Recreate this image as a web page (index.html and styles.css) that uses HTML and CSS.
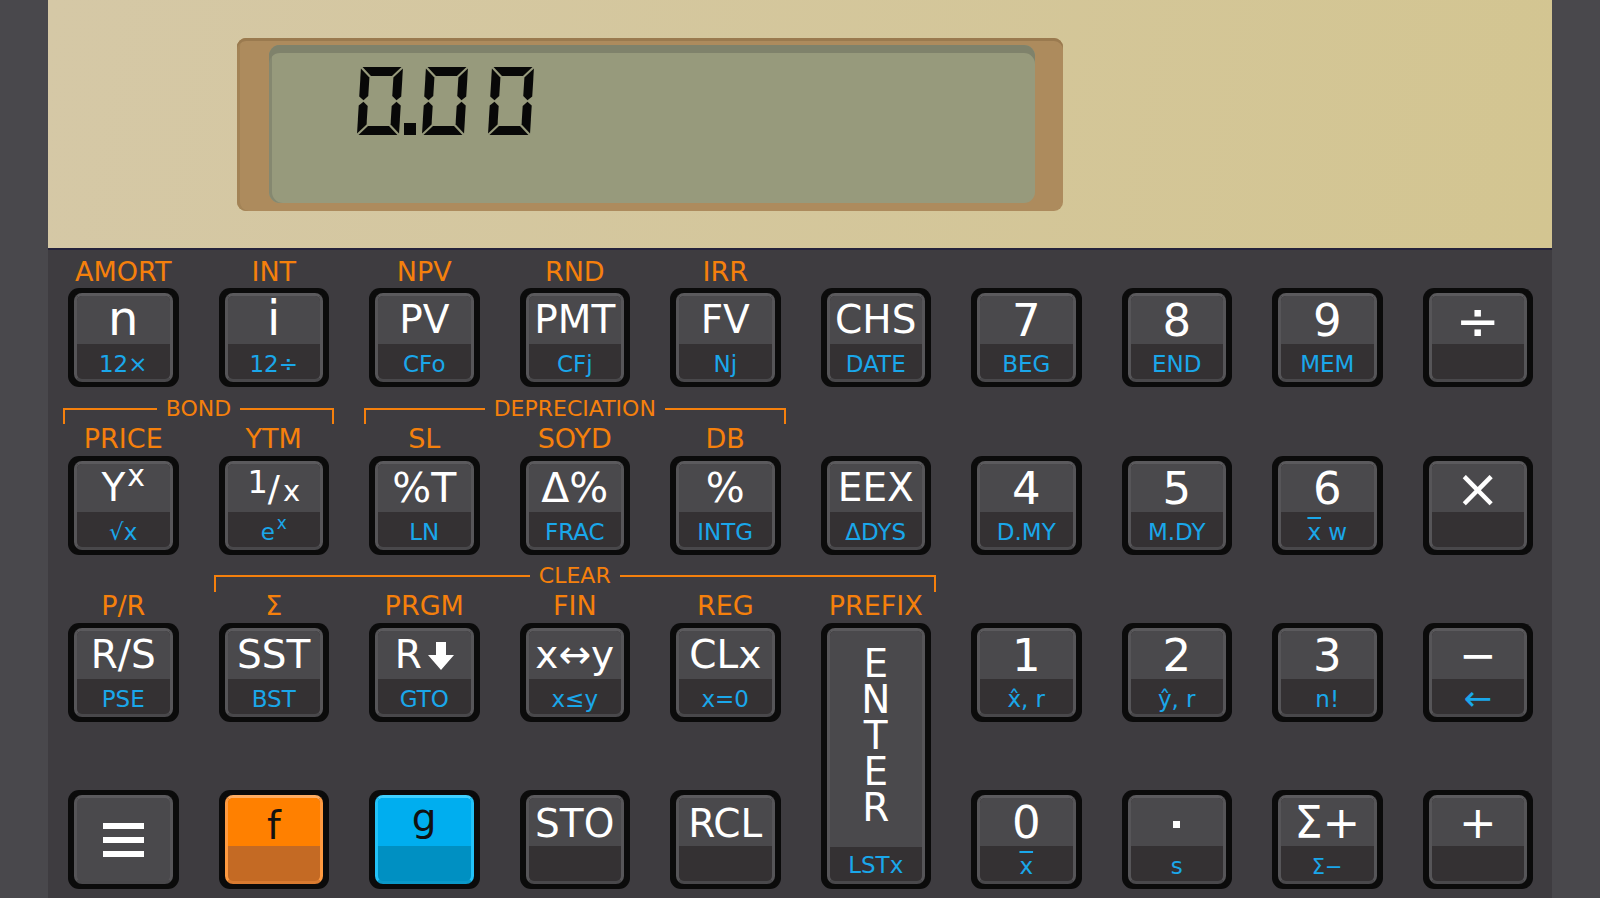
FILE: index.html
```html
<!DOCTYPE html>
<html>
<head>
<meta charset="utf-8">
<link rel="stylesheet" href="styles.css">
</head>
<body>
<div class="calc">
  <div class="display">
    <div class="bezel">
      <div class="lcd">
        <svg class="digits" width="190" height="70" viewBox="0 0 190 70">
          <g fill="#080808">
            <g transform="translate(6,0) skewX(-3.4)">
              <polygon points="1.5,0 40.5,0 31.5,9 10.5,9"/>
              <polygon points="0,1.5 9,10.5 9,29 4.5,33.3 0,29.5"/>
              <polygon points="42,1.5 42,29.5 37.5,33.3 33,29 33,10.5"/>
              <polygon points="0,38.5 4.5,34.7 9,39 9,57.5 0,66.5"/>
              <polygon points="42,38.5 42,66.5 33,57.5 33,39 37.5,34.7"/>
              <polygon points="10.5,59 31.5,59 40.5,68 1.5,68"/>
            </g>
            <rect x="49" y="56" width="12" height="12"/>
            <g transform="translate(71,0) skewX(-3.4)">
              <polygon points="1.5,0 40.5,0 31.5,9 10.5,9"/>
              <polygon points="0,1.5 9,10.5 9,29 4.5,33.3 0,29.5"/>
              <polygon points="42,1.5 42,29.5 37.5,33.3 33,29 33,10.5"/>
              <polygon points="0,38.5 4.5,34.7 9,39 9,57.5 0,66.5"/>
              <polygon points="42,38.5 42,66.5 33,57.5 33,39 37.5,34.7"/>
              <polygon points="10.5,59 31.5,59 40.5,68 1.5,68"/>
            </g>
            <g transform="translate(137,0) skewX(-3.4)">
              <polygon points="1.5,0 40.5,0 31.5,9 10.5,9"/>
              <polygon points="0,1.5 9,10.5 9,29 4.5,33.3 0,29.5"/>
              <polygon points="42,1.5 42,29.5 37.5,33.3 33,29 33,10.5"/>
              <polygon points="0,38.5 4.5,34.7 9,39 9,57.5 0,66.5"/>
              <polygon points="42,38.5 42,66.5 33,57.5 33,39 37.5,34.7"/>
              <polygon points="10.5,59 31.5,59 40.5,68 1.5,68"/>
            </g>
          </g>
        </svg>
      </div>
    </div>
  </div>

  <div class="keys">
    <!-- row 1 labels -->
    <div class="lab r1">AMORT</div>
    <div class="lab r1">INT</div>
    <div class="lab r1">NPV</div>
    <div class="lab r1">RND</div>
    <div class="lab r1">IRR</div>

    <!-- row 1 keys -->
    <div class="key r2 big"><div class="face"><div class="top">n</div><div class="bot">12×</div></div></div>
    <div class="key r2 big"><div class="face"><div class="top">i</div><div class="bot">12÷</div></div></div>
    <div class="key r2"><div class="face"><div class="top">PV</div><div class="bot">CFo</div></div></div>
    <div class="key r2"><div class="face"><div class="top">PMT</div><div class="bot">CFj</div></div></div>
    <div class="key r2"><div class="face"><div class="top">FV</div><div class="bot">Nj</div></div></div>
    <div class="key r2"><div class="face"><div class="top">CHS</div><div class="bot">DATE</div></div></div>
    <div class="key r2 num"><div class="face"><div class="top">7</div><div class="bot">BEG</div></div></div>
    <div class="key r2 num"><div class="face"><div class="top">8</div><div class="bot">END</div></div></div>
    <div class="key r2 num"><div class="face"><div class="top">9</div><div class="bot">MEM</div></div></div>
    <div class="key r2 num"><div class="face"><div class="top"><span class="op">÷</span></div><div class="bot"></div></div></div>

    <!-- brackets -->
    <div class="bracket r3 c1-3"><div class="bl"></div><span>BOND</span><div class="brr"></div></div>
    <div class="bracket r3 c3-6"><div class="bl"></div><span>DEPRECIATION</span><div class="brr"></div></div>

    <!-- row 2 labels -->
    <div class="lab r4">PRICE</div>
    <div class="lab r4">YTM</div>
    <div class="lab r4">SL</div>
    <div class="lab r4">SOYD</div>
    <div class="lab r4">DB</div>

    <!-- row 2 keys -->
    <div class="key r5"><div class="face"><div class="top">Y<span class="supx">x</span></div><div class="bot">√x</div></div></div>
    <div class="key r5"><div class="face"><div class="top"><span class="frac1">1</span><span class="slash">/</span><span class="fracx">x</span></div><div class="bot">e<span class="supe">x</span></div></div></div>
    <div class="key r5 pct"><div class="face"><div class="top">%T</div><div class="bot">LN</div></div></div>
    <div class="key r5 pct"><div class="face"><div class="top">Δ%</div><div class="bot">FRAC</div></div></div>
    <div class="key r5 pct"><div class="face"><div class="top">%</div><div class="bot">INTG</div></div></div>
    <div class="key r5"><div class="face"><div class="top">EEX</div><div class="bot">ΔDYS</div></div></div>
    <div class="key r5 num"><div class="face"><div class="top">4</div><div class="bot">D.MY</div></div></div>
    <div class="key r5 num"><div class="face"><div class="top">5</div><div class="bot">M.DY</div></div></div>
    <div class="key r5 num"><div class="face"><div class="top">6</div><div class="bot"><span class="ovl">x</span> w</div></div></div>
    <div class="key r5 num"><div class="face"><div class="top"><span class="op">×</span></div><div class="bot"></div></div></div>

    <!-- clear bracket -->
    <div class="bracket r6 c2-7"><div class="bl"></div><span>CLEAR</span><div class="brr"></div></div>

    <!-- row 3 labels -->
    <div class="lab r7">P/R</div>
    <div class="lab r7">Σ</div>
    <div class="lab r7">PRGM</div>
    <div class="lab r7">FIN</div>
    <div class="lab r7">REG</div>
    <div class="lab r7">PREFIX</div>

    <!-- row 3 keys -->
    <div class="key r8"><div class="face"><div class="top">R/S</div><div class="bot">PSE</div></div></div>
    <div class="key r8"><div class="face"><div class="top">SST</div><div class="bot">BST</div></div></div>
    <div class="key r8"><div class="face"><div class="top">R<svg class="rdn" width="26" height="28" viewBox="0 0 26 28"><polygon fill="#fff" points="8,0 18,0 18,13 26,13 13,28 0,13 8,13"/></svg></div><div class="bot">GTO</div></div></div>
    <div class="key r8"><div class="face"><div class="top">x↔y</div><div class="bot">x≤y</div></div></div>
    <div class="key r8"><div class="face"><div class="top">CLx</div><div class="bot">x=0</div></div></div>
    <div class="key enter"><div class="face"><div class="top"><span class="el">E</span><span class="el">N</span><span class="el">T</span><span class="el">E</span><span class="el">R</span></div><div class="bot">LSTx</div></div></div>
    <div class="key r8 num"><div class="face"><div class="top">1</div><div class="bot">x̂, r</div></div></div>
    <div class="key r8 num"><div class="face"><div class="top">2</div><div class="bot">ŷ, r</div></div></div>
    <div class="key r8 num"><div class="face"><div class="top">3</div><div class="bot">n!</div></div></div>
    <div class="key r8 num"><div class="face"><div class="top">−</div><div class="bot"><span class="larr">←</span></div></div></div>

    <!-- row 4 keys -->
    <div class="key r10 menu"><div class="face"><span class="bar"></span><span class="bar"></span><span class="bar"></span></div></div>
    <div class="key r10 fkey"><div class="face"><div class="top">f</div><div class="bot"></div></div></div>
    <div class="key r10 gkey"><div class="face"><div class="top">g</div><div class="bot"></div></div></div>
    <div class="key r10 sto"><div class="face"><div class="top">STO</div><div class="bot"></div></div></div>
    <div class="key r10 sto"><div class="face"><div class="top">RCL</div><div class="bot"></div></div></div>
    <div class="key r10 num"><div class="face"><div class="top">0</div><div class="bot"><span class="ovl">x</span></div></div></div>
    <div class="key r10 num"><div class="face"><div class="top"><span class="dot"></span></div><div class="bot">s</div></div></div>
    <div class="key r10 num"><div class="face"><div class="top">Σ+</div><div class="bot"><span class="sm">Σ−</span></div></div></div>
    <div class="key r10 num"><div class="face"><div class="top">+</div><div class="bot"></div></div></div>
  </div>
</div>
</body>
</html>
```

FILE: styles.css
```css
* { box-sizing: border-box; }

body {
  margin: 0;
  background: #49484c;
  font-family: "DejaVu Sans", "Verdana", sans-serif;
}

.calc {
  width: 1504px;
  height: 898px;
  margin-left: 48px;
  overflow: hidden;
}

/* ---------- display ---------- */
.display {
  height: 250px;
  background: linear-gradient(100deg, #d5c8a6 0%, #d3c591 100%);
  border-bottom: 2px solid #25233b;
  padding: 38px 0 0 189px;
}

.bezel {
  width: 826px;
  height: 173px;
  background: #ad8b5d;
  border-radius: 9px;
  padding: 7px 28px 8px 32px;
  box-shadow: inset 0 3px 0 #9a7a4f, inset 3px 0 0 #a38356;
}

.lcd {
  height: 158px;
  background: #979a7c;
  border-radius: 11px;
  box-shadow: inset 0 8px 0 #7f826b, inset 3px 0 0 #858870;
  padding: 22px 0 0 86px;
}

.digits { display: block; }

/* ---------- keyboard ---------- */
.keys {
  height: 648px;
  background: #3e3c40;
  display: grid;
  grid-template-columns: repeat(10, 110.5px);
  column-gap: 40px;
  grid-template-rows: 30px 99px 38px 31px 99px 37px 31px 99px 68px 99px;
  align-items: start;
  padding: 8px 0 0 20px;
}

.r1 { grid-row: 1; }
.r2 { grid-row: 2; }
.r3 { grid-row: 3; }
.r4 { grid-row: 4; }
.r5 { grid-row: 5; }
.r6 { grid-row: 6; }
.r7 { grid-row: 7; }
.r8 { grid-row: 8; }
.r10 { grid-row: 10; }

.lab {
  color: #f5800c;
  font-size: 27px;
  line-height: 27px;
  text-align: center;
  white-space: nowrap;
}

/* brackets */
.bracket {
  display: flex;
  align-items: flex-start;
  height: 16px;
  margin: 21px -5px 0 -5px;
}
.bracket.r6 { margin-top: 20px; height: 17px; }
.c1-3 { grid-column: 1 / 3; }
.c3-6 { grid-column: 3 / 6; }
.c2-7 { grid-column: 2 / 7; }

.bracket .bl,
.bracket .brr {
  flex: 1;
  height: 100%;
  border-top: 2px solid #f5800c;
}
.bracket .bl { border-left: 2px solid #f5800c; }
.bracket .brr { border-right: 2px solid #f5800c; }
.bracket span {
  color: #f5800c;
  font-size: 22px;
  line-height: 22px;
  padding: 0 9px;
  margin-top: -10px;
  white-space: nowrap;
}

/* keys */
.key {
  height: 99px;
  background: #0b0b0b;
  border-radius: 11px;
  padding: 5px 6px;
}

.face {
  height: 89px;
  border: 3px solid;
  border-color: #5b5a5d #565558 #49484b #565558;
  border-radius: 8px;
  overflow: hidden;
  display: flex;
  flex-direction: column;
  background: #343133;
}

.top {
  height: 48px;
  flex: none;
  background: #4a494c;
  color: #ffffff;
  font-size: 39px;
  line-height: 48px;
  text-align: center;
  white-space: nowrap;
}

.bot {
  flex: 1;
  color: #1aa7ea;
  font-size: 23px;
  line-height: 40px;
  text-align: center;
  white-space: nowrap;
}

.num .top { font-size: 45px; line-height: 50px; }
.pct .top { font-size: 41px; }
.big .top { font-size: 48px; line-height: 44px; }

.supx {
  font-size: 30px;
  line-height: 0;
  vertical-align: 15px;
  margin-left: 2px;
}
.frac1 { font-size: 32px; line-height: 0; vertical-align: 8px; }
.slash { font-size: 36px; line-height: 0; }
.fracx { font-size: 29px; line-height: 0; margin-left: 3px; }
.supe { font-size: 17px; line-height: 0; vertical-align: 11px; margin-left: 2px; }

.op {
  font-size: 53px;
  line-height: 0;
  vertical-align: -3px;
}

.ovl { text-decoration: overline; text-decoration-thickness: 2px; }
.larr { font-size: 34px; line-height: 0; vertical-align: -3px; }
.sm { font-size: 21px; }

.rdn {
  margin-left: 6px;
  vertical-align: -2px;
}

.dot {
  display: inline-block;
  width: 7px;
  height: 7px;
  background: #fff;
  vertical-align: 10px;
}

/* enter */
.enter {
  grid-row: 8 / span 3;
  grid-column: 6;
  height: auto;
  align-self: stretch;
}
.enter .face { height: 100%; }
.enter .top {
  flex: 1;
  height: auto;
  display: flex;
  flex-direction: column;
  align-items: center;
  padding-top: 15px;
}
.el {
  display: block;
  height: 36px;
  line-height: 36px;
}
.enter .bot { flex: none; height: 34px; line-height: 36px; }

/* menu */
.menu .face {
  background: #4a494c;
  align-items: center;
  justify-content: center;
  gap: 8px;
}
.bar {
  display: block;
  width: 41px;
  height: 6px;
  background: #ffffff;
}

/* f / g */
.fkey .face {
  border-color: #ffad62 #ff9a40 #d87a30 #ff9a40;
  background: #c46a24;
}
.fkey .top {
  background: #ff8000;
  color: #111;
  line-height: 55px;
}
.gkey .face {
  border-color: #3fd0ff #22c2f8 #0a98c8 #22c2f8;
  background: #0090c2;
}
.gkey .top {
  background: #00aeef;
  color: #111;
  line-height: 39px;
}

.sto .top { line-height: 52px; }
```
